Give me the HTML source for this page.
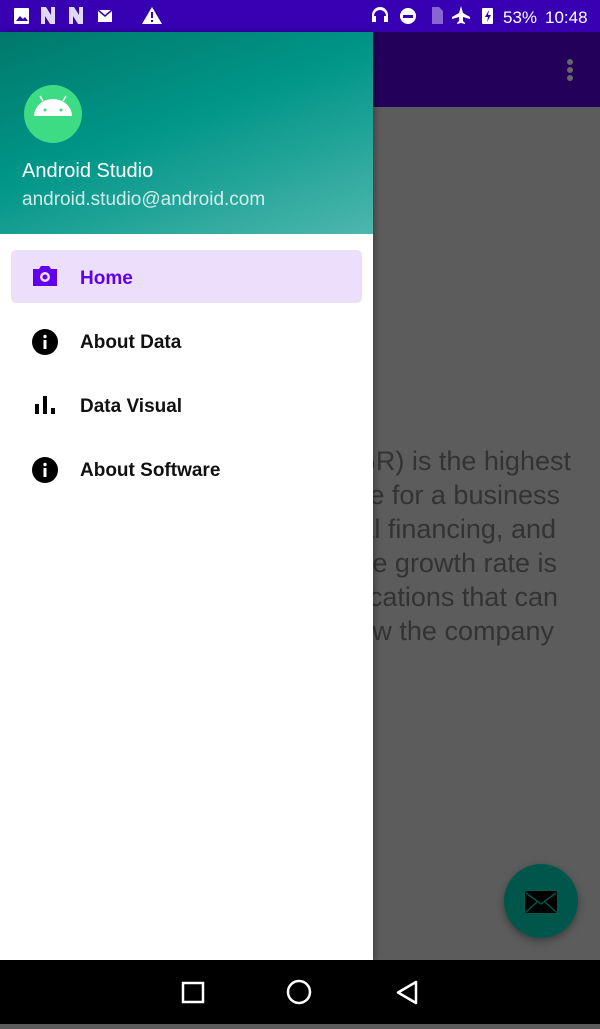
<!DOCTYPE html>
<html><head><meta charset="utf-8"><style>
*{margin:0;padding:0;box-sizing:border-box}
body{width:600px;height:1024px;position:relative;overflow:hidden;font-family:"Liberation Sans",Roboto,sans-serif;background:#5c5c5c}
.abs{position:absolute}
#status{left:0;top:0;width:600px;height:32px;background:#3700b3;color:#fff}
#toolbar{left:373px;top:32px;width:227px;height:75px;background:#23005a}
.line{position:absolute;white-space:nowrap;font-size:27px;color:#333;text-align:right}
#drawer{left:0;top:32px;width:373px;height:928px;background:#fff;box-shadow:2px 0 6px rgba(0,0,0,.3)}
#header{left:0;top:0;width:373px;height:202px;background:linear-gradient(160deg,#00796b 0%,#009688 45%,#4db6ac 100%)}
.item{position:absolute;left:0;width:373px;height:54px;font-size:19px;font-weight:bold;color:#111}
.item span{position:absolute;left:80px;top:18px}
#nav{left:0;top:960px;width:600px;height:64px;background:#000}
</style></head><body>
<div class="abs" id="status">
<svg width="600" height="32" style="position:absolute;left:0;top:0">
<g fill="#fff">
<rect x="14" y="8" width="15" height="16" rx="1"/>
<path d="M16 21l4-5 3 3 2-2 3 4z" fill="#3700b3"/>
<path d="M41 7h5l5 8V7h4v17h-5l-5-8v8h-4z" opacity=".85"/>
<path d="M69 7h5l5 8V7h4v17h-5l-5-8v8h-4z" opacity=".85"/>
<rect x="98" y="10" width="14" height="12"/><path d="M98 10l7 6 7-6" stroke="#3700b3" fill="none" stroke-width="1.5"/>
<path d="M152 7l10 17h-20z"/><rect x="151" y="12" width="2" height="6" fill="#3700b3"/><rect x="151" y="20" width="2" height="2" fill="#3700b3"/>
<path d="M372 22v-7a8 8 0 0116 0v7h-4v-6h2a6 6 0 00-12 0h2v6z"/>
<circle cx="408" cy="16" r="8"/><rect x="403" y="15" width="10" height="3" fill="#3700b3"/>
<path d="M432 7h7l4 4v13h-11z" opacity=".4"/>
<path d="M461 6l2 7 7 4v2l-7-2 0 4 2 2v1l-4-1-4 1v-1l2-2 0-4-7 2v-2l7-4z"/>
<rect x="482" y="8" width="11" height="16" rx="1"/><path d="M489 10l-4 7h3l-1 5 4-7h-3z" fill="#3700b3"/>
</g>
<text x="503" y="23" fill="#fff" font-size="17" font-family="Liberation Sans">53%</text>
<text x="545" y="23" fill="#fff" font-size="17" font-family="Liberation Sans">10:48</text>
</svg>
</div>
<div class="abs" id="toolbar"><div class="abs" style="left:194px;top:27px"><div style="width:6px;height:6px;border-radius:3px;background:#666;margin-bottom:2px"></div><div style="width:6px;height:6px;border-radius:3px;background:#666;margin-bottom:2px"></div><div style="width:6px;height:6px;border-radius:3px;background:#666"></div></div></div>
<div class="line" style="right:29px;top:446px">Rate (SGR) is the highest</div>
<div class="line" style="right:40px;top:480px">achievable for a business</div>
<div class="line" style="right:44px;top:514px">without external financing, and</div>
<div class="line" style="right:43px;top:548px">sustainable growth rate is</div>
<div class="line" style="right:42px;top:582px">the implications that can</div>
<div class="line" style="right:46px;top:616px">allow the company</div>
<div class="abs" style="left:504px;top:864px;width:74px;height:74px;border-radius:37px;background:#01564c;box-shadow:0 3px 8px rgba(0,0,0,.35)">
<svg width="74" height="74" style="position:absolute;left:0;top:0"><rect x="21" y="27" width="32" height="22" rx="2" fill="#000"/><path d="M22 29l15 11 15-11M22 48l11-10M52 48l-11-10" stroke="#01564c" stroke-width="1.5" fill="none"/></svg>
</div>
<div class="abs" id="drawer">
<div class="abs" id="header">
<svg width="60" height="60" style="position:absolute;left:23px;top:52px"><circle cx="30" cy="30" r="29" fill="#3ddc84"/><path d="M11 32a19 17 0 0138 0z" fill="#fff"/><path d="M20 17l-3-5M40 17l3-5" stroke="#fff" stroke-width="1.5"/><circle cx="22" cy="26" r="1.5" fill="#3ddc84"/><circle cx="38" cy="26" r="1.5" fill="#3ddc84"/></svg>
<div class="abs" style="left:22px;top:128px;color:#fff;font-size:20px">Android Studio</div>
<div class="abs" style="left:22px;top:157px;color:rgba(255,255,255,.8);font-size:19px">android.studio@android.com</div>
</div>
<div class="abs" style="left:11px;top:218px;width:351px;height:53px;background:#ecdffb;border-radius:5px"></div>
<div class="item" style="top:218px;color:#6200ee"><svg width="28" height="24" style="position:absolute;left:31px;top:14px"><path d="M2 5h6l2-3h8l2 3h6v17H2z" fill="#6200ee"/><circle cx="14" cy="13" r="5" fill="#ecdffb"/><circle cx="14" cy="13" r="2.5" fill="#6200ee"/></svg><span>Home</span></div>
<div class="item" style="top:282px"><svg width="28" height="28" style="position:absolute;left:31px;top:14px"><circle cx="14" cy="14" r="13" fill="#000"/><rect x="12.5" y="12" width="3" height="9" fill="#fff"/><circle cx="14" cy="8.5" r="1.7" fill="#fff"/></svg><span>About Data</span></div>
<div class="item" style="top:346px"><svg width="28" height="28" style="position:absolute;left:31px;top:14px"><rect x="4" y="12" width="4" height="10" fill="#000"/><rect x="12" y="4" width="4" height="18" fill="#000"/><rect x="20" y="16" width="4" height="6" fill="#000"/></svg><span>Data Visual</span></div>
<div class="item" style="top:410px"><svg width="28" height="28" style="position:absolute;left:31px;top:14px"><circle cx="14" cy="14" r="13" fill="#000"/><rect x="12.5" y="12" width="3" height="9" fill="#fff"/><circle cx="14" cy="8.5" r="1.7" fill="#fff"/></svg><span>About Software</span></div>
</div>
<div class="abs" id="nav"><svg width="600" height="64"><rect x="183" y="23" width="20" height="19" fill="none" stroke="#fff" stroke-width="2.5"/><circle cx="299" cy="32" r="11" fill="none" stroke="#fff" stroke-width="2.5"/><path d="M416 22v21l-18-10.5z" fill="none" stroke="#fff" stroke-width="2.5" stroke-linejoin="round"/></svg></div>
</body></html>
